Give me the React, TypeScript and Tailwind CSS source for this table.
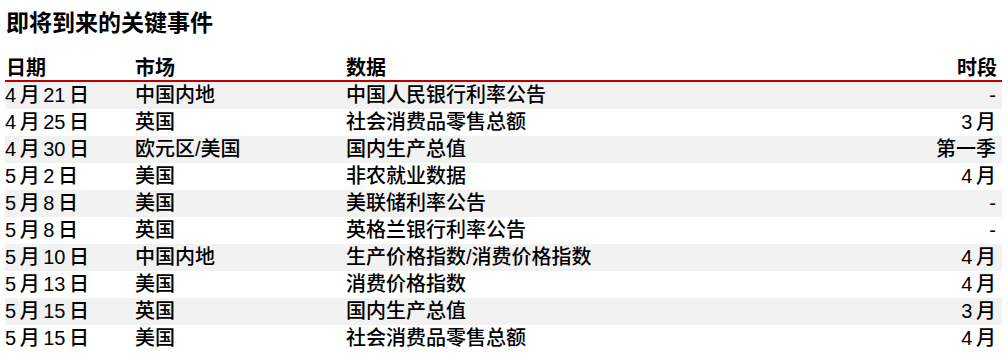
const rows = [
  { date: "4 月 21 日", market: "中国内地", data: "中国人民银行利率公告", period: "-" },
  { date: "4 月 25 日", market: "英国", data: "社会消费品零售总额", period: "3 月" },
  { date: "4 月 30 日", market: "欧元区/美国", data: "国内生产总值", period: "第一季" },
  { date: "5 月 2 日", market: "美国", data: "非农就业数据", period: "4 月" },
  { date: "5 月 8 日", market: "美国", data: "美联储利率公告", period: "-" },
  { date: "5 月 8 日", market: "英国", data: "英格兰银行利率公告", period: "-" },
  { date: "5 月 10 日", market: "中国内地", data: "生产价格指数/消费价格指数", period: "4 月" },
  { date: "5 月 13 日", market: "美国", data: "消费价格指数", period: "4 月" },
  { date: "5 月 15 日", market: "英国", data: "国内生产总值", period: "3 月" },
  { date: "5 月 15 日", market: "美国", data: "社会消费品零售总额", period: "4 月" },
];

export default function App() {
  return (
    <div className="w-[1008px] h-[355px] overflow-hidden bg-white text-black pt-2 pl-[5px] pr-[6px] font-['Liberation_Sans','Noto_Sans_CJK_SC',sans-serif]">
      <h1 className="ml-[1px] text-[23px] leading-[30px] font-bold">即将到来的关键事件</h1>
      <div className="mt-[18px] grid grid-cols-[130px_211px_1fr_auto] h-[26px] items-center border-b-2 border-[#c00000] text-[20px] font-bold leading-[24px]">
        <span className="pl-[1px]">日期</span>
        <span>市场</span>
        <span>数据</span>
        <span className="pr-[5px]">时段</span>
      </div>
      {rows.map(({ date, market, data, period }, i) => (
        <div
          key={i}
          className={`grid grid-cols-[130px_211px_1fr_auto] h-[27px] items-center text-[20px] leading-[27px] font-medium ${
            i % 2 === 0 ? "bg-[#f2f2f2]" : "bg-white"
          }`}
        >
          <span className="[word-spacing:-2px]">{date}</span>
          <span>{market}</span>
          <span>{data}</span>
          <span className="pr-[6px] text-right [word-spacing:-2px]">{period}</span>
        </div>
      ))}
    </div>
  );
}
